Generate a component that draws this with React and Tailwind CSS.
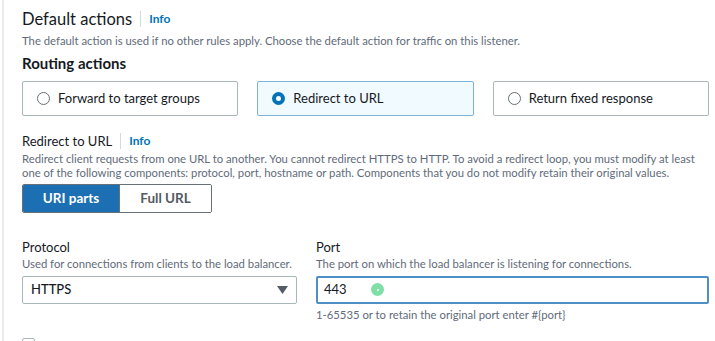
import React, { useState } from 'react';

const font = { fontFamily: 'Lato, "Noto Sans", Arial, sans-serif' };

const Info = () => (
  <span className="flex items-center">
    <span className="mx-[8px] h-[16px] w-px bg-[#d5dbdb]" />
    <span className="text-[12px] font-bold text-[#0073bb]">Info</span>
  </span>
);

const RadioCard = ({ label, selected, onClick }) => (
  <button
    onClick={onClick}
    className={`flex h-[35px] flex-1 items-center gap-[8px] rounded-[2px] border px-[14px] text-left text-[13px] text-[#16191f] ${
      selected ? 'border-[#7eb3d9] bg-[#f1faff]' : 'border-[#aab7b8] bg-white'
    }`}
  >
    {selected ? (
      <span className="flex h-[13px] w-[13px] items-center justify-center rounded-full bg-[#0073bb]">
        <span className="h-[5px] w-[5px] rounded-full bg-white" />
      </span>
    ) : (
      <span className="h-[13px] w-[13px] rounded-full border border-[#687078] bg-white" />
    )}
    {label}
  </button>
);

const App = () => {
  const [action, setAction] = useState('redirect');
  const [mode, setMode] = useState('parts');

  return (
    <div className="h-[341px] w-[715px] overflow-hidden bg-white" style={font}>
      <div className="ml-[2px] h-full border-l-2 border-[#e9ebed] pl-[18px] pr-[6px] pt-[8px] text-[#16191f]">
        <div className="flex items-center">
          <h2 className="text-[16.5px] leading-[22px] text-[#16191f]">Default actions</h2>
          <Info />
        </div>
        <p className="mt-[3px] text-[11.3px] leading-[15px] text-[#5f6b7a]">
          The default action is used if no other rules apply. Choose the default action for traffic on this listener.
        </p>
        <h3 className="mt-[5px] text-[15px] font-bold leading-[20px]">Routing actions</h3>

        <div className="mt-[8px] flex gap-[19px]">
          <RadioCard label="Forward to target groups" selected={action === 'forward'} onClick={() => setAction('forward')} />
          <RadioCard label="Redirect to URL" selected={action === 'redirect'} onClick={() => setAction('redirect')} />
          <RadioCard label="Return fixed response" selected={action === 'fixed'} onClick={() => setAction('fixed')} />
        </div>

        <div className="mt-[16px] flex items-center">
          <span className="text-[13px] leading-[18px]">Redirect to URL</span>
          <Info />
        </div>
        <p className="mt-[2px] text-[11.3px] leading-[14px] text-[#5f6b7a]">
          Redirect client requests from one URL to another. You cannot redirect HTTPS to HTTP. To avoid a redirect loop, you must modify at least one of the following components: protocol, port, hostname or path. Components that you do not modify retain their original values.
        </p>

        <div className="mt-[4px] flex w-[190px] overflow-hidden rounded-[2px] border border-[#687078] text-[13.5px] font-bold">
          <button
            onClick={() => setMode('parts')}
            className={`h-[27px] w-[96px] ${mode === 'parts' ? 'bg-[#1d6fb3] text-white' : 'bg-white text-[#545b64]'}`}
          >
            URI parts
          </button>
          <button
            onClick={() => setMode('full')}
            className={`h-[27px] flex-1 border-l border-[#687078] ${mode === 'full' ? 'bg-[#1d6fb3] text-white' : 'bg-white text-[#545b64]'}`}
          >
            Full URL
          </button>
        </div>

        <div className="mt-[25px] flex gap-[19px]">
          <div className="w-[275px]">
            <div className="text-[13px] leading-[18px]">Protocol</div>
            <div className="whitespace-nowrap text-[11.3px] leading-[16px] text-[#5f6b7a]">Used for connections from clients to the load balancer.</div>
            <div className="mt-[4px] flex h-[28px] items-center justify-between rounded-[2px] border border-[#aab7b8] px-[8px] text-[13px]">
              <span className="font-medium">HTTPS</span>
              <svg width="11" height="8" viewBox="0 0 11 8">
                <path d="M0 0 H11 L5.5 8 Z" fill="#545b64" />
              </svg>
            </div>
          </div>
          <div className="flex-1">
            <div className="text-[13px] leading-[18px]">Port</div>
            <div className="text-[11.3px] leading-[16px] text-[#5f6b7a]">The port on which the load balancer is listening for connections.</div>
            <div className="relative mt-[4px] flex h-[28px] items-center rounded-[2px] border-2 border-[#4f8fc6] px-[6px] text-[13px]">
              443
              <span className="absolute left-[53px] top-[5px] flex h-[13px] w-[13px] items-center justify-center rounded-full bg-[#7ee0a6]">
                <span className="h-[2px] w-[2px] rounded-full bg-white" />
              </span>
            </div>
            <div className="mt-[3px] text-[11.3px] leading-[16px] text-[#5f6b7a]">1-65535 or to retain the original port enter #&#123;port&#125;</div>
          </div>
        </div>

        <div className="mt-[15px] h-[10px] w-[13px] rounded-[2px] border border-[#aab7b8]" />
      </div>
    </div>
  );
};

export default App;
